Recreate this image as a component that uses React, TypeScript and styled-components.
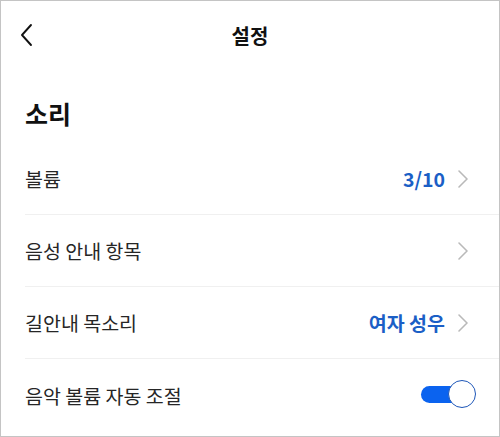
import styled, { createGlobalStyle } from "styled-components";

const GlobalStyle = createGlobalStyle`
    html, body {
        margin: 0;
        padding: 0;
        background: #ffffff;
    }
    body {
        font-family: "Noto Sans CJK KR", "Noto Sans", sans-serif;
        color: #1e1e1e;
    }
`;

const Screen = styled.div`
    box-sizing: border-box;
    width: 500px;
    height: 437px;
    border: 1px solid #c4c4c4;
    background: #ffffff;
    overflow: hidden;
    display: flex;
    flex-direction: column;
`;

const Header = styled.header`
    height: 68px;
    display: grid;
    grid-template-columns: 60px 1fr 60px;
    align-items: center;
`;

const BackButton = styled.button`
    background: transparent;
    border: 0;
    padding: 0 0 0 17px;
    display: flex;
    align-items: center;
    cursor: pointer;
    svg {
        width: 18px;
        height: 24px;
    }
`;

const Title = styled.h1`
    margin: 0;
    text-align: center;
    font-size: 20px;
    font-weight: 700;
    color: #111;
`;

const SectionTitle = styled.h2`
    margin: 14px 0 0;
    padding: 0 24px;
    height: 60px;
    display: flex;
    align-items: center;
    font-size: 25px;
    font-weight: 700;
    color: #111;
`;

const List = styled.ul`
    list-style: none;
    margin: 0;
    padding: 0 0 0 24px;
`;

const Row = styled.li`
    box-sizing: border-box;
    height: 72px;
    display: flex;
    align-items: center;
    justify-content: space-between;
    padding-right: 26px;
    border-bottom: 1px solid #f0f0f0;
    &:last-child {
        border-bottom: 0;
    }
`;

const Label = styled.span`
    font-size: 19.5px;
    color: #262626;
`;

const Trailing = styled.div`
    display: flex;
    align-items: center;
    gap: 12px;
`;

const Value = styled.span`
    font-size: 19.5px;
    font-weight: 700;
    color: #1b5fc6;
`;

const Chevron = styled.svg`
    width: 12px;
    height: 20px;
    margin-right: 4px;
`;

const Switch = styled.button<{ $on: boolean }>`
    position: relative;
    width: 56px;
    height: 30px;
    margin-right: -4px;
    border: 0;
    padding: 0;
    background: transparent;
    cursor: pointer;
    &::before {
        content: "";
        position: absolute;
        left: 0;
        top: 6px;
        width: 40px;
        height: 17px;
        border-radius: 9px;
        background: ${(p) => (p.$on ? "#0b63ef" : "#d0d0d0")};
    }
    &::after {
        content: "";
        position: absolute;
        top: 0;
        left: ${(p) => (p.$on ? "27px" : "0")};
        width: 26px;
        height: 26px;
        border-radius: 50%;
        background: #fff;
        border: 1.5px solid #1d56b8;
    }
`;

type Item = { label: string; value?: string; arrow?: boolean; toggle?: boolean };

const items: Item[] = [
    { label: "볼륨", value: "3/10", arrow: true },
    { label: "음성 안내 항목", arrow: true },
    { label: "길안내 목소리", value: "여자 성우", arrow: true },
    { label: "음악 볼륨 자동 조절", toggle: true },
];

export default function App() {
    return (
        <>
            <GlobalStyle />
            <Screen>
                <Header>
                    <BackButton aria-label="뒤로">
                        <svg viewBox="0 0 18 24" fill="none" stroke="#111" strokeWidth="1.9" strokeLinecap="round" strokeLinejoin="round">
                            <path d="M13 2 L4 12 L13 22" />
                        </svg>
                    </BackButton>
                    <Title>설정</Title>
                    <span />
                </Header>
                <SectionTitle>소리</SectionTitle>
                <List>
                    {items.map((item) => (
                        <Row key={item.label}>
                            <Label>{item.label}</Label>
                            <Trailing>
                                {item.value && <Value>{item.value}</Value>}
                                {item.arrow && (
                                    <Chevron viewBox="0 0 12 20" fill="none" stroke="#b9b9b9" strokeWidth="1.6" strokeLinecap="round" strokeLinejoin="round">
                                        <path d="M2 2 L10 10 L2 18" />
                                    </Chevron>
                                )}
                                {item.toggle && <Switch $on={true} aria-label={item.label} />}
                            </Trailing>
                        </Row>
                    ))}
                </List>
            </Screen>
        </>
    );
}
